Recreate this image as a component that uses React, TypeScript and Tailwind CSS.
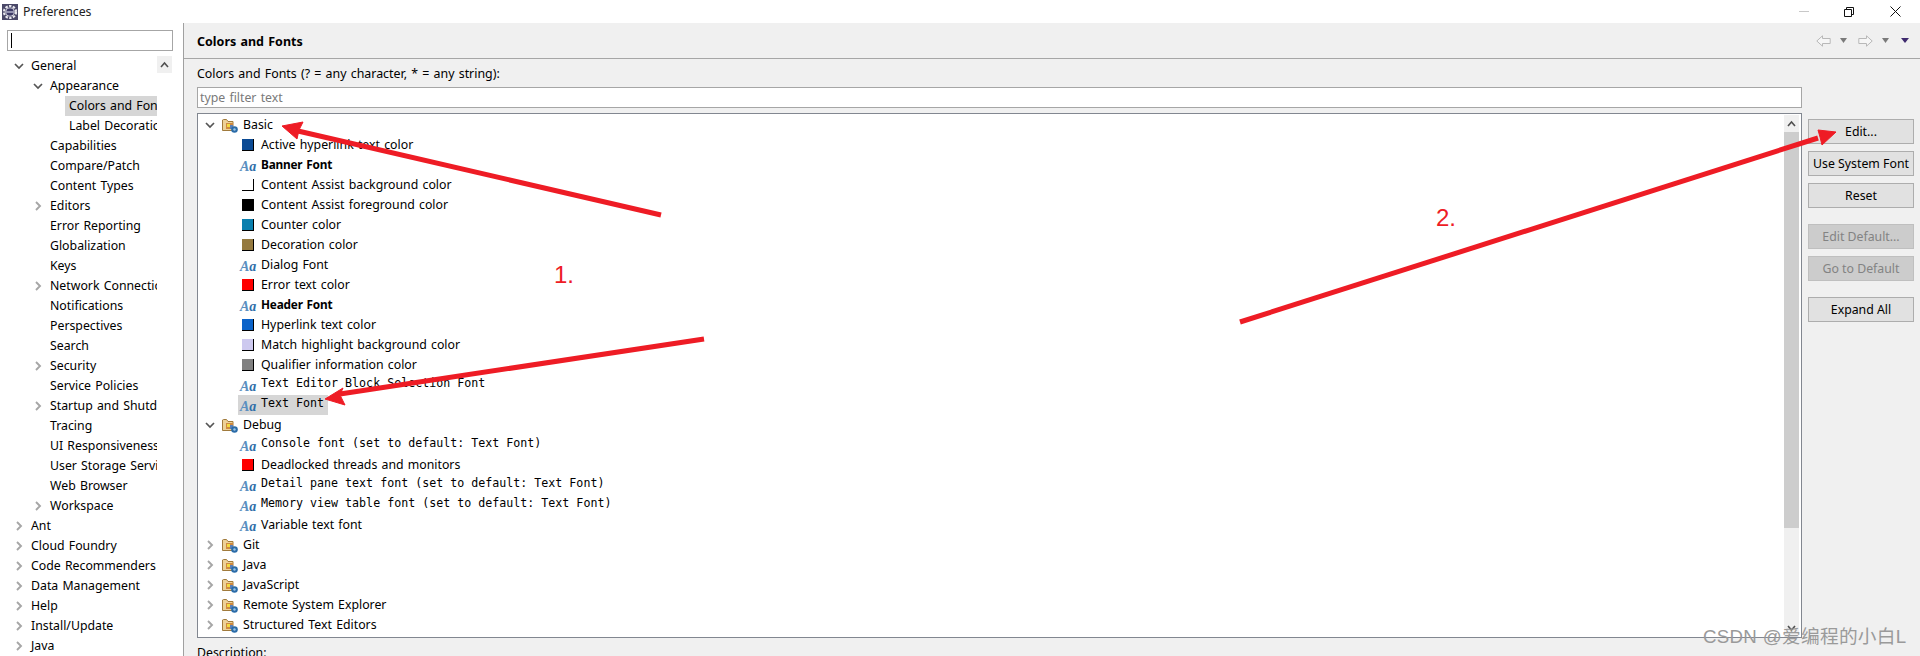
import React from "react";

const UI = "font-['Noto_Sans','Open_Sans',sans-serif]";

function Chevron({ open }: { open: boolean }) {
  return (
    <svg width="10" height="10" viewBox="0 0 10 10" className="shrink-0">
      {open ? (
        <path d="M1 3 L5 7 L9 3" fill="none" stroke="#555" strokeWidth="1.7" />
      ) : (
        <path d="M3 1 L7 5 L3 9" fill="none" stroke="#a6a6a6" strokeWidth="1.9" />
      )}
    </svg>
  );
}

function FolderIcon() {
  return (
    <svg width="16" height="16" viewBox="0 0 16 16" className="shrink-0">
      <path d="M0.5 3 L0.5 13.5 L11 13.5 L11 4.5 L6 4.5 L4.5 2.5 L1.5 2.5 Z" fill="#ecd198" stroke="#a07a3c" strokeWidth="1" />
      <rect x="4" y="6" width="7" height="6" fill="#d08a40" />
      <rect x="5" y="7" width="3" height="3" fill="#f0dc40" />
      <rect x="8" y="8" width="3" height="4" fill="#5a7fb8" />
      <circle cx="12.5" cy="12.5" r="3.3" fill="#2a6ca8" />
      <circle cx="12.5" cy="12.5" r="1.2" fill="#9cc4e8" />
    </svg>
  );
}

function Aa() {
  return (
    <span className="w-4 shrink-0 translate-y-[2px] text-center font-['Liberation_Serif',serif] text-[14px] leading-none font-bold text-[#2f6ea8] italic">
      <span className="text-[#5a8fc0]">A</span>a
    </span>
  );
}

function Swatch({ color }: { color: string }) {
  return <span className="h-3 w-3 shrink-0 border-r border-b border-black" style={{ background: color }} />;
}

type Item = { t: string; kind: "sw" | "aa"; color?: string; bold?: boolean; mono?: boolean; sel?: boolean };

const basic: Item[] = [
  { t: "Active hyperlink text color", kind: "sw", color: "#0b4a94" },
  { t: "Banner Font", kind: "aa", bold: true },
  { t: "Content Assist background color", kind: "sw", color: "#ffffff" },
  { t: "Content Assist foreground color", kind: "sw", color: "#000000" },
  { t: "Counter color", kind: "sw", color: "#0a7fae" },
  { t: "Decoration color", kind: "sw", color: "#957a3f" },
  { t: "Dialog Font", kind: "aa" },
  { t: "Error text color", kind: "sw", color: "#ff0000" },
  { t: "Header Font", kind: "aa", bold: true },
  { t: "Hyperlink text color", kind: "sw", color: "#0b63c9" },
  { t: "Match highlight background color", kind: "sw", color: "#cdc9ef" },
  { t: "Qualifier information color", kind: "sw", color: "#808080" },
  { t: "Text Editor Block Selection Font", kind: "aa", mono: true },
  { t: "Text Font", kind: "aa", mono: true, sel: true },
];

const debug: Item[] = [
  { t: "Console font (set to default: Text Font)", kind: "aa", mono: true },
  { t: "Deadlocked threads and monitors", kind: "sw", color: "#ff0000" },
  { t: "Detail pane text font (set to default: Text Font)", kind: "aa", mono: true },
  { t: "Memory view table font (set to default: Text Font)", kind: "aa", mono: true },
  { t: "Variable text font", kind: "aa" },
];

function Row({ it }: { it: Item }) {
  return (
    <div className="flex h-5 items-center pl-[40px]">
      <div className={`flex h-5 items-center pr-1 pl-[2px] ${it.sel ? "bg-[#d6d6d6]" : ""}`}>
        <span className="flex w-4 justify-center">
          {it.kind === "aa" ? <Aa /> : <Swatch color={it.color!} />}
        </span>
        <span
          className={`ml-[5px] whitespace-pre ${it.bold ? "-translate-y-px text-[11.8px] font-bold tracking-[-0.2px]" : ""} ${
            it.mono ? "-translate-y-[2px] font-['DejaVu_Sans_Mono',monospace] text-[11.65px] [word-spacing:0px]" : ""
          }`}
        >
          {it.t}
        </span>
      </div>
    </div>
  );
}

function Group({ name, open }: { name: string; open: boolean }) {
  return (
    <div className="flex h-5 items-center pl-[7px]">
      <Chevron open={open} />
      <span className="ml-[7px]">
        <FolderIcon />
      </span>
      <span className="ml-[5px]">{name}</span>
    </div>
  );
}

const prefs: [string, number, boolean | null, boolean?][] = [
  ["General", 0, true],
  ["Appearance", 1, true],
  ["Colors and Fonts", 2, null, true],
  ["Label Decorations", 2, null],
  ["Capabilities", 1, null],
  ["Compare/Patch", 1, null],
  ["Content Types", 1, null],
  ["Editors", 1, false],
  ["Error Reporting", 1, null],
  ["Globalization", 1, null],
  ["Keys", 1, null],
  ["Network Connections", 1, false],
  ["Notifications", 1, null],
  ["Perspectives", 1, null],
  ["Search", 1, null],
  ["Security", 1, false],
  ["Service Policies", 1, null],
  ["Startup and Shutdown", 1, false],
  ["Tracing", 1, null],
  ["UI Responsiveness", 1, null],
  ["User Storage Service", 1, null],
  ["Web Browser", 1, null],
  ["Workspace", 1, false],
  ["Ant", 0, false],
  ["Cloud Foundry", 0, false],
  ["Code Recommenders", 0, false],
  ["Data Management", 0, false],
  ["Help", 0, false],
  ["Install/Update", 0, false],
  ["Java", 0, false],
];

function Btn({ label, off }: { label: string; off?: boolean }) {
  return (
    <div
      className={`flex h-[25px] w-[106px] items-center justify-center border whitespace-nowrap [word-spacing:0px] ${
        off ? "border-[#bfbfbf] bg-[#cccccc] text-[#838383]" : "border-[#adadad] bg-[#e1e1e1] text-black"
      }`}
    >
      {label}
    </div>
  );
}

function Scrollbar({ thumb, downArrow }: { thumb: string; downArrow?: boolean }) {
  return (
    <div className="flex w-[15px] shrink-0 flex-col bg-[#f0f0f0]">
      <div className="flex h-[17px] items-center justify-center">
        <svg width="9" height="7" viewBox="0 0 9 7">
          <path d="M1 6 L4.5 2 L8 6" fill="none" stroke="#505050" strokeWidth="1.6" />
        </svg>
      </div>
      <div className={`bg-[#cdcdcd] ${thumb}`} />
      {downArrow && (
        <div className="mt-auto flex h-[17px] items-center justify-center">
          <svg width="9" height="7" viewBox="0 0 9 7">
            <path d="M1 1 L4.5 5 L8 1" fill="none" stroke="#505050" strokeWidth="1.6" />
          </svg>
        </div>
      )}
    </div>
  );
}

function Tb({ dim }: { dim?: boolean }) {
  return (
    <svg width={dim ? 7 : 8} height="5" viewBox="0 0 7 4" preserveAspectRatio="none" className="block">
      <path d="M0 0 H7 L3.5 4 Z" fill={dim ? "#7a7a7a" : "#3f2a6e"} />
    </svg>
  );
}

function NavArrow({ flip }: { flip?: boolean }) {
  return (
    <svg width="15" height="12" viewBox="0 0 15 12" className={flip ? "-scale-x-100" : ""}>
      <path d="M0.8 6 L6.5 0.8 V3.5 H14.2 V8.5 H6.5 V11.2 Z" fill="#f6f6f6" stroke="#b8b8b8" strokeWidth="1" />
    </svg>
  );
}

export default function App() {
  return (
    <div className={`relative flex h-[656px] w-[1920px] flex-col overflow-hidden bg-white text-[12.3px] leading-5 text-black [word-spacing:1px] ${UI}`}>
      {/* title bar */}
      <div className="flex h-[23px] shrink-0 items-center bg-white">
        <svg width="16" height="16" viewBox="0 0 16 16" className="ml-[2px]">
          <rect width="16" height="16" fill="#4a4868" />
          <circle cx="8" cy="8" r="6" fill="none" stroke="#e8e8ee" strokeWidth="2.2" strokeDasharray="2.4 1.4" />
          <circle cx="8" cy="8" r="4.6" fill="#e8e8ee" />
          <circle cx="8" cy="8" r="3.8" fill="#3d3a66" />
          <rect x="4.2" y="7.3" width="7.6" height="1.4" fill="#b8b8d0" />
        </svg>
        <span className="ml-[5px] text-[#222] [word-spacing:0px]">Preferences</span>
        <div className="ml-auto flex items-center">
          <div className="mr-[35px] h-px w-[10px] bg-[#c8c8c8]" />
          <svg width="10" height="10" viewBox="0 0 10 10" className="mr-[36px]">
            <path d="M0.5 2.5 H7.5 V9.5 H0.5 Z M2.5 2.5 V0.5 H9.5 V7.5 H7.5" fill="none" stroke="#111" strokeWidth="1" />
          </svg>
          <svg width="11" height="11" viewBox="0 0 11 11" className="mr-[19px]">
            <path d="M0.5 0.5 L10.5 10.5 M10.5 0.5 L0.5 10.5" stroke="#111" strokeWidth="1" />
          </svg>
        </div>
      </div>

      <div className="flex min-h-0 flex-1">
        {/* left pane */}
        <div className="flex w-[183px] shrink-0 flex-col pt-[7px] pl-[7px]">
          <div className="flex h-[21px] w-[166px] items-center border border-[#a6a6a6] px-[3px]">
            <div className="h-[15px] w-px bg-black" />
          </div>
          <div className="mt-[5px] flex min-h-0 w-[166px] flex-1">
            <div className="w-[150px] overflow-hidden">
              {prefs.map(([t, lvl, open, sel]) => (
                <div
                  key={t}
                  className={`relative flex h-5 items-center whitespace-nowrap ${
                    lvl === 0 ? "pl-[24px]" : lvl === 1 ? "pl-[43px]" : "pl-[58px]"
                  }`}
                >
                  {sel && <div className="absolute top-0 bottom-0 left-[58px] w-[92px] bg-[#d6d6d6]" />}
                  {open !== null && (
                    <span className={`absolute ${lvl === 0 ? "left-[7px]" : "left-[26px]"}`}>
                      <Chevron open={open} />
                    </span>
                  )}
                  <span className={`relative ${lvl === 2 ? "pl-[4px]" : ""}`}>{t}</span>
                </div>
              ))}
            </div>
            <div className="flex w-[16px] flex-col">
              <Scrollbar thumb="flex-1" />
            </div>
          </div>
        </div>

        {/* right pane */}
        <div className="flex min-w-0 flex-1 flex-col border-l border-[#a0a0a0] bg-[#f0f0f0]">
          <div className="flex h-[36px] shrink-0 items-center border-b border-[#a6a6a6] pr-[6px] pl-[13px]">
            <span className="translate-y-px text-[12.5px] font-bold">Colors and Fonts</span>
            <div className="ml-auto flex items-center">
              <NavArrow />
              <span className="mr-[11px] ml-[9px]"><Tb dim /></span>
              <NavArrow flip />
              <span className="mr-[12px] ml-[9px]"><Tb dim /></span>
              <span className="mr-[5px]"><Tb /></span>
            </div>
          </div>
          <div className="flex min-h-0 flex-1 flex-col pt-[5px] pr-[5px] pl-[13px]">
            <div className="h-5 shrink-0 text-[12.4px]">Colors and Fonts (? = any character, * = any string):</div>
            <div className="mt-[3px] flex h-[21px] w-[1605px] shrink-0 items-center border border-[#a6a6a6] bg-white pl-[2px] text-[#7a7a7a]">
              type filter text
            </div>
            <div className="mt-[5px] flex shrink-0 gap-[6px]">
              <div className="flex h-[525px] w-[1605px] shrink-0 border border-[#828790] bg-white pt-px pr-[2px]">
                <div className="min-w-0 flex-1">
                  <Group name="Basic" open />
                  {basic.map((b) => <Row key={b.t} it={b} />)}
                  <Group name="Debug" open />
                  {debug.map((b) => <Row key={b.t} it={b} />)}
                  <Group name="Git" open={false} />
                  <Group name="Java" open={false} />
                  <Group name="JavaScript" open={false} />
                  <Group name="Remote System Explorer" open={false} />
                  <Group name="Structured Text Editors" open={false} />
                </div>
                <Scrollbar thumb="h-[396px]" downArrow />
              </div>
              <div className="flex flex-col pt-[6px]">
                <Btn label="Edit..." />
                <div className="mt-[7px]"><Btn label="Use System Font" /></div>
                <div className="mt-[7px]"><Btn label="Reset" /></div>
                <div className="mt-[16px]"><Btn label="Edit Default..." off /></div>
                <div className="mt-[7px]"><Btn label="Go to Default" off /></div>
                <div className="mt-[16px]"><Btn label="Expand All" /></div>
              </div>
            </div>
            <div className="mt-[5px] h-5 shrink-0">Description:</div>
          </div>
        </div>
      </div>

      {/* annotation overlay */}
      <svg width="1920" height="656" viewBox="0 0 1920 656" className="pointer-events-none absolute top-0 left-0">
        <g fill="#ee1c25" stroke="#ee1c25">
          <path d="M661 215 L298 131" strokeWidth="5" />
          <path d="M282 126 L303 122 L299 130 L297 139 Z" strokeWidth="1" />
          <path d="M704 339 L340 394" strokeWidth="5" />
          <path d="M325 399 L343 388 L340 395 L345 405 Z" strokeWidth="1" />
          <path d="M1240 322 L1818 138" strokeWidth="5" />
          <path d="M1836 132 L1818 130 L1820 137 L1822 145 Z" strokeWidth="1" />
        </g>
      </svg>
      <div className="absolute top-[261px] left-[554px] font-['Liberation_Sans',sans-serif] text-[24px] leading-7 text-[#ee1c25]">1.</div>
      <div className="absolute top-[204px] left-[1436px] font-['Liberation_Sans',sans-serif] text-[24px] leading-7 text-[#ee1c25]">2.</div>
      <div className="absolute top-[625px] left-[1703px] font-['Liberation_Sans','Noto_Sans_CJK_SC',sans-serif] text-[18.7px] leading-6 tracking-[0.3px] text-[#9a9a9a] [word-spacing:0px]">
        CSDN @爱编程的小白L
      </div>
    </div>
  );
}
